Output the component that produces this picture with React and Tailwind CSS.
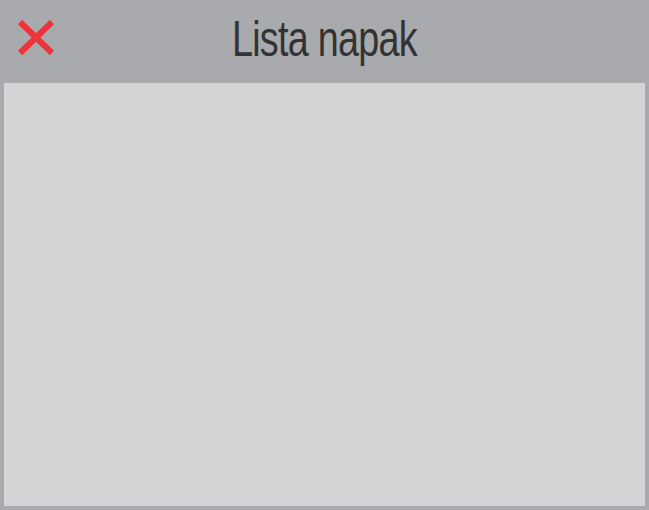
import React from "react";

export default function App() {
  return (
    <div className="w-[649px] h-[510px] bg-[#a9aaad] flex flex-col px-[4px] pb-[4px] overflow-hidden">
      {/* header */}
      <div className="relative h-[83px] flex items-center justify-center shrink-0">
        <button className="absolute left-[12px] top-[19px] w-[40px] h-[38px] flex items-center justify-center" aria-label="Close">
          <svg width="40" height="38" viewBox="0 0 40 38">
            <path d="M4 3 L36 34 M36 3 L4 34" stroke="#ee333a" strokeWidth="6" strokeLinecap="butt" fill="none" />
          </svg>
        </button>
        <h1
          className="text-[50px] leading-none text-[#333333] tracking-[-1px] scale-x-[0.755] origin-center mt-[-6px]"
          style={{ fontFamily: '"Liberation Sans Narrow", "Liberation Sans", Arial, sans-serif' }}
        >
          Lista napak
        </h1>
      </div>
      {/* list body */}
      <div className="flex-1 bg-[#d3d4d6]"></div>
    </div>
  );
}
